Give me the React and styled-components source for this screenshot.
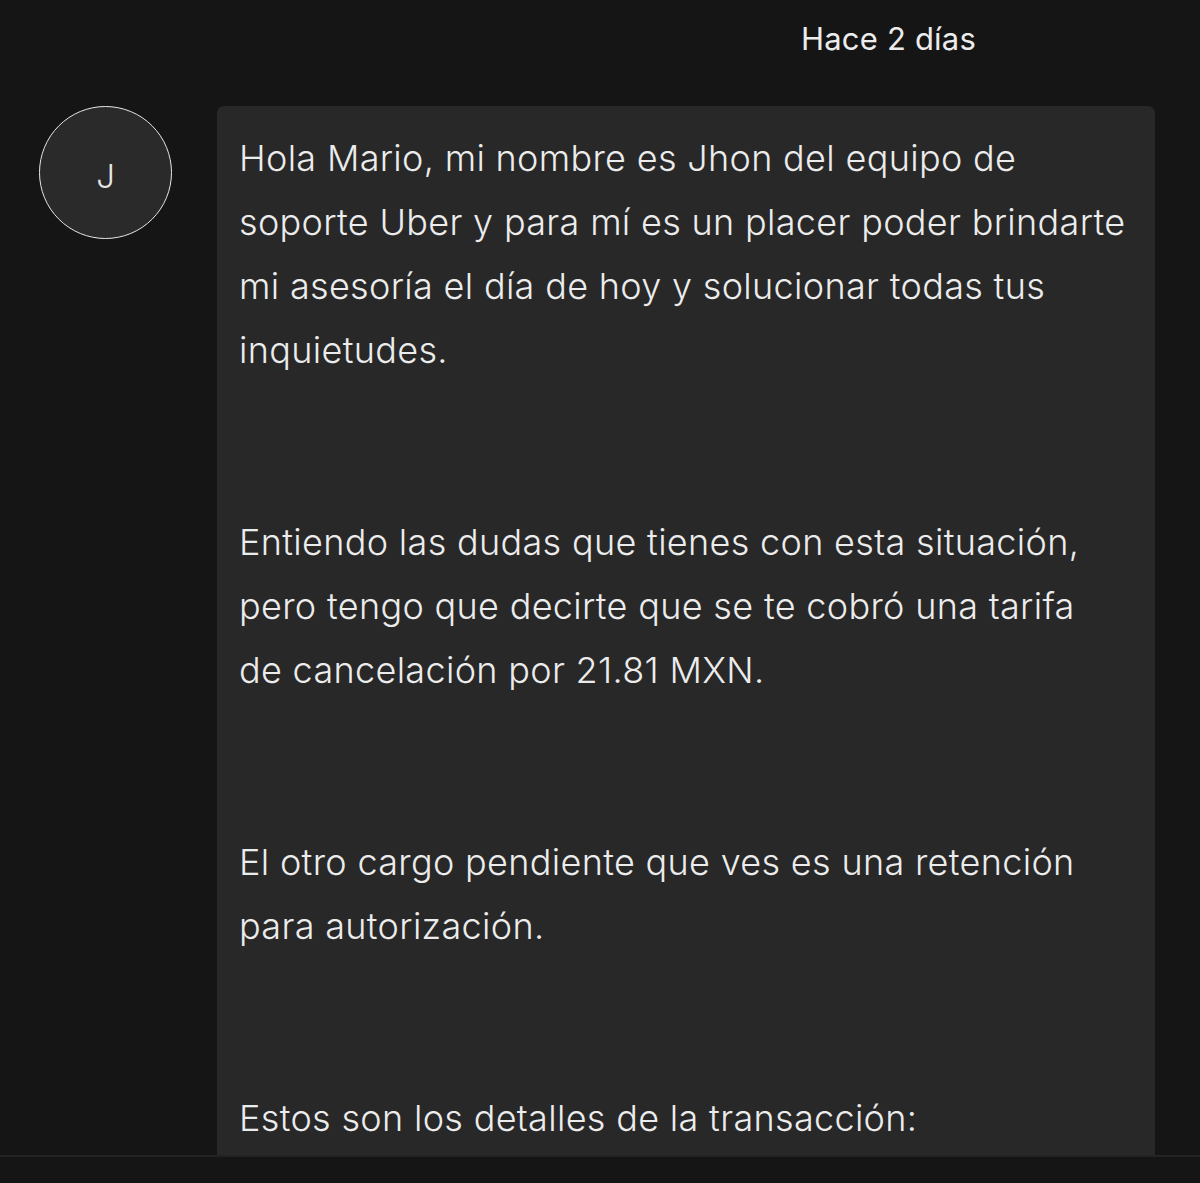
import React from "react";
import styled, { createGlobalStyle } from "styled-components";

const Global = createGlobalStyle`
  html, body { margin: 0; padding: 0; background: #151515; }
  body { font-family: "Inter", "Roboto", "Liberation Sans", sans-serif; color: #e8e8e8; }
`;

const Page = styled.div`
  height: 100vh;
  display: flex;
  flex-direction: column;
  background: #151515;
  overflow: hidden;
`;

const Scroll = styled.div`
  flex: 1;
  min-height: 0;
  overflow: hidden;
`;

const TimeRow = styled.div`
  display: flex;
  justify-content: flex-end;
  padding: 18px 224px 0 0;
  height: 106px;
  box-sizing: border-box;
`;

const Time = styled.span`
  font-size: 31px;
  font-weight: 400;
  letter-spacing: 0.2px;
  color: #ececec;
  line-height: 42px;
`;

const MessageRow = styled.div`
  display: flex;
  align-items: flex-start;
  gap: 45px;
  padding-left: 39px;
  padding-right: 45px;
`;

const Avatar = styled.div`
  flex: none;
  box-sizing: border-box;
  width: 133px;
  height: 133px;
  border-radius: 50%;
  border: 1.5px solid #e6e6e6;
  background: #2a2a2a;
  display: flex;
  align-items: center;
  justify-content: center;
  font-size: 33px;
  font-weight: 300;
  color: #e6e6e6;
  padding-top: 6px;
`;

const Bubble = styled.div`
  flex: 1;
  background: #282828;
  border-radius: 7px;
  padding: 20px 10px 40px 22px;
`;

const Paragraph = styled.p`
  margin: 0 0 128px 0;
  font-size: 36px;
  line-height: 64px;
  font-weight: 270;
  letter-spacing: 0.32px;
  color: #ececec;
  white-space: nowrap;
`;

const Line = styled.span`
  display: block;
`;

const Footer = styled.div`
  flex: none;
  height: 26px;
  background: #151515;
  border-top: 2px solid #232323;
`;

const paragraphs = [
  [
    "Hola Mario, mi nombre es Jhon del equipo de",
    "soporte Uber y para mí es un placer poder brindarte",
    "mi asesoría el día de hoy y solucionar todas tus",
    "inquietudes.",
  ],
  [
    "Entiendo las dudas que tienes con esta situación,",
    "pero tengo que decirte que se te cobró una tarifa",
    "de cancelación por 21.81 MXN.",
  ],
  ["El otro cargo pendiente que ves es una retención", "para autorización."],
  ["Estos son los detalles de la transacción:"],
];

export default function App() {
  return (
    <Page>
      <Global />
      <Scroll>
        <TimeRow>
          <Time>Hace 2 días</Time>
        </TimeRow>
        <MessageRow>
          <Avatar>J</Avatar>
          <Bubble>
            {paragraphs.map((lines, i) => (
              <Paragraph key={i}>
                {lines.map((l, j) => (
                  <Line key={j}>{l}</Line>
                ))}
              </Paragraph>
            ))}
          </Bubble>
        </MessageRow>
      </Scroll>
      <Footer />
    </Page>
  );
}
